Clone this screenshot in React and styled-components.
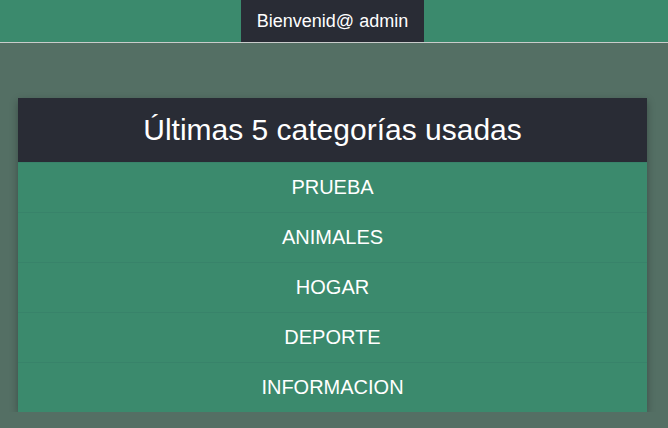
import React from "react";
import styled, { createGlobalStyle } from "styled-components";

const GlobalStyle = createGlobalStyle`
  html, body {
    margin: 0;
    padding: 0;
    background: #546f64;
    font-family: "Liberation Sans", Arial, sans-serif;
  }
`;

const NavBar = styled.nav`
  display: flex;
  justify-content: center;
  height: 42px;
  background: #3b8a6d;
  border-bottom: 1px solid #c9cccb;
  padding-right: 3px;
`;

const NavItem = styled.div`
  display: flex;
  align-items: center;
  padding: 0 16px;
  background: #292c35;
  color: #ffffff;
  font-size: 18px;
`;

const Card = styled.section`
  margin: 55px 21px 0 18px;
  box-shadow: 0 3px 8px rgba(0, 0, 0, 0.3);
`;

const CardHeader = styled.h2`
  margin: 0;
  height: 64px;
  display: flex;
  align-items: center;
  justify-content: center;
  background: #292c35;
  color: #ffffff;
  font-size: 30px;
  font-weight: normal;
`;

const CategoryRow = styled.div`
  height: 49px;
  display: flex;
  align-items: center;
  justify-content: center;
  background: #3b8a6d;
  color: #ffffff;
  font-size: 20px;
  border-top: 1px solid #38836a;
`;

const categories = ["PRUEBA", "ANIMALES", "HOGAR", "DEPORTE", "INFORMACION"];

const App = () => (
  <>
    <GlobalStyle />
    <NavBar>
      <NavItem>Bienvenid@ admin</NavItem>
    </NavBar>
    <Card>
      <CardHeader>Últimas 5 categorías usadas</CardHeader>
      {categories.map((c) => (
        <CategoryRow key={c}>{c}</CategoryRow>
      ))}
    </Card>
  </>
);

export default App;
